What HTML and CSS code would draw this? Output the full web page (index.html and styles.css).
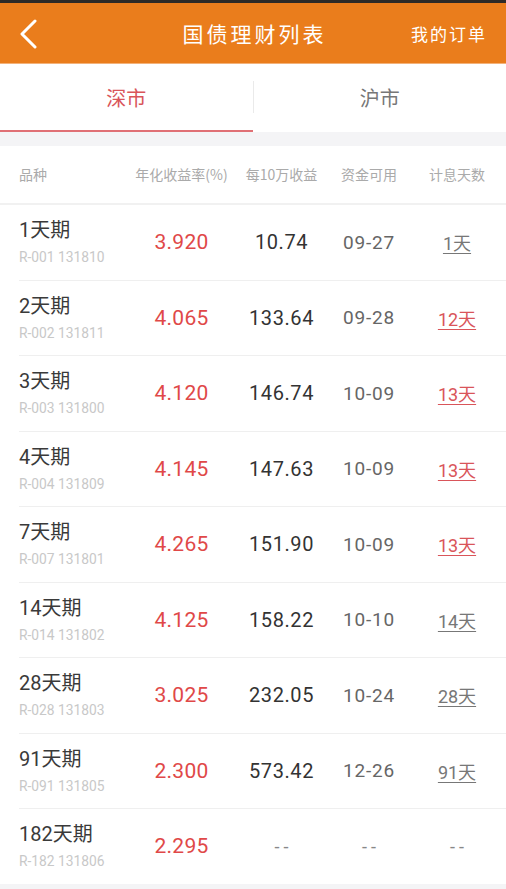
FILE: index.html
```html
<!DOCTYPE html>
<html>
<head>
  <meta charset="utf-8">
  <title>国债理财列表</title>
  <link rel="stylesheet" href="styles.css">
</head>
<body>
  <div class="status"></div>
  <div class="topbar">
    <a class="back" href="#">
      <svg width="20" height="30" viewBox="0 0 20 30"><path d="M16 2 L3 15 L16 28" fill="none" stroke="#fff" stroke-width="3" stroke-linecap="round" stroke-linejoin="round"/></svg>
    </a>
    <div class="title">国债理财列表</div>
    <a class="orders" href="#">我的订单</a>
  </div>

  <div class="tabs">
    <div class="tab active">深市</div>
    <div class="tab">沪市</div>
  </div>

  <div class="gap"></div>

  <div class="list">
    <div class="row head">
      <div class="c-name">品种</div>
      <div>年化收益率(%)</div>
      <div>每10万收益</div>
      <div>资金可用</div>
      <div>计息天数</div>
    </div>

    <div class="row">
      <div class="c-name"><div class="name">1天期</div><div class="code">R-001 131810</div></div>
      <div class="rate">3.920</div>
      <div class="gain">10.74</div>
      <div class="date">09-27</div>
      <div><a class="days" href="#">1天</a></div>
    </div>
    <div class="row">
      <div class="c-name"><div class="name">2天期</div><div class="code">R-002 131811</div></div>
      <div class="rate">4.065</div>
      <div class="gain">133.64</div>
      <div class="date">09-28</div>
      <div><a class="days hot" href="#">12天</a></div>
    </div>
    <div class="row">
      <div class="c-name"><div class="name">3天期</div><div class="code">R-003 131800</div></div>
      <div class="rate">4.120</div>
      <div class="gain">146.74</div>
      <div class="date">10-09</div>
      <div><a class="days hot" href="#">13天</a></div>
    </div>
    <div class="row">
      <div class="c-name"><div class="name">4天期</div><div class="code">R-004 131809</div></div>
      <div class="rate">4.145</div>
      <div class="gain">147.63</div>
      <div class="date">10-09</div>
      <div><a class="days hot" href="#">13天</a></div>
    </div>
    <div class="row">
      <div class="c-name"><div class="name">7天期</div><div class="code">R-007 131801</div></div>
      <div class="rate">4.265</div>
      <div class="gain">151.90</div>
      <div class="date">10-09</div>
      <div><a class="days hot" href="#">13天</a></div>
    </div>
    <div class="row">
      <div class="c-name"><div class="name">14天期</div><div class="code">R-014 131802</div></div>
      <div class="rate">4.125</div>
      <div class="gain">158.22</div>
      <div class="date">10-10</div>
      <div><a class="days" href="#">14天</a></div>
    </div>
    <div class="row">
      <div class="c-name"><div class="name">28天期</div><div class="code">R-028 131803</div></div>
      <div class="rate">3.025</div>
      <div class="gain">232.05</div>
      <div class="date">10-24</div>
      <div><a class="days" href="#">28天</a></div>
    </div>
    <div class="row">
      <div class="c-name"><div class="name">91天期</div><div class="code">R-091 131805</div></div>
      <div class="rate">2.300</div>
      <div class="gain">573.42</div>
      <div class="date">12-26</div>
      <div><a class="days" href="#">91天</a></div>
    </div>
    <div class="row last">
      <div class="c-name"><div class="name">182天期</div><div class="code">R-182 131806</div></div>
      <div class="rate">2.295</div>
      <div class="dash">--</div>
      <div class="dash">--</div>
      <div class="dash">--</div>
    </div>
  </div>
</body>
</html>
```

FILE: styles.css
```css
body {
    margin: 0;
    background-color: #f4f4f6;
    font-family: Roboto, "Noto Sans CJK SC", sans-serif;
    color: #333;
  }
  .status {
    height: 3px;
    background-color: #2e2a27;
  }
  .topbar {
    height: 60px;
    background-color: #ea7d1c;
    border-bottom: 1px solid #f3b27a;
    display: flex;
    align-items: center;
    justify-content: space-between;
    padding: 0 21px 0 19px;
    position: relative;
  }
  .back {
    display: flex;
    width: 20px;
    margin-top: 2px;
  }
  .title {
    position: absolute;
    left: 0;
    right: 0;
    text-align: center;
    color: #fff;
    font-family: "Noto Sans CJK SC", sans-serif;
    font-size: 21px;
    letter-spacing: 3px;
    text-indent: 3px;
    pointer-events: none;
  }
  .orders {
    color: #fff;
    text-decoration: none;
    font-family: "Noto Sans CJK SC", sans-serif;
    font-size: 17px;
    letter-spacing: 2px;
    margin-right: -2px;
  }
  .tabs {
    display: flex;
    height: 68px;
    background-color: #fff;
  }
  .tab {
    flex: 1;
    display: flex;
    align-items: center;
    justify-content: center;
    font-family: "Noto Sans CJK SC", sans-serif;
    font-size: 20px;
    color: #777;
    padding-bottom: 2px;
  }
  .tab + .tab {
    border-left: 1px solid #eaeaea;
    margin: 17px 0 19px;
    padding-bottom: 0;
  }
  .tab.active {
    color: #d9555a;
    border-bottom: 2px solid #e07075;
    padding-bottom: 0;
  }
  .gap {
    height: 14px;
  }
  .list {
    background-color: #fff;
  }
  .row {
    display: grid;
    grid-template-columns: 111px 103px 97px 78px 98px;
    align-items: center;
    margin-left: 19px;
    height: 74.5px;
    border-bottom: 1px solid #efefef;
    text-align: center;
  }
  .row.head {
    height: 55px;
    margin-left: 0;
    padding-left: 19px;
    padding-bottom: 2px;
    border-bottom: 2px solid #f1f1f1;
    font-family: "Noto Sans CJK SC", sans-serif;
    font-size: 14px;
    color: #aaa;
  }
  .row.last {
    border-bottom: none;
  }
  .c-name {
    text-align: left;
  }
  .name {
    font-size: 20px;
    color: #3a3a3a;
    line-height: 26px;
    margin-top: -1px;
  }
  .code {
    font-size: 13.8px;
    color: #c8c8c8;
    line-height: 18px;
    margin-top: 5px;
  }
  .rate {
    font-size: 21px;
    color: #e04848;
    letter-spacing: 0.3px;
  }
  .gain {
    font-size: 20px;
    color: #333;
    letter-spacing: 0.6px;
  }
  .date {
    font-size: 19px;
    color: #666;
    letter-spacing: 0.8px;
  }
  .days {
    font-size: 18px;
    color: #777;
    text-decoration: underline;
    text-underline-offset: 3px;
  }
  .days.hot {
    color: #d9555a;
  }
  .dash {
    font-size: 18px;
    color: #888;
    letter-spacing: 4px;
    text-indent: 4px;
  }
```
